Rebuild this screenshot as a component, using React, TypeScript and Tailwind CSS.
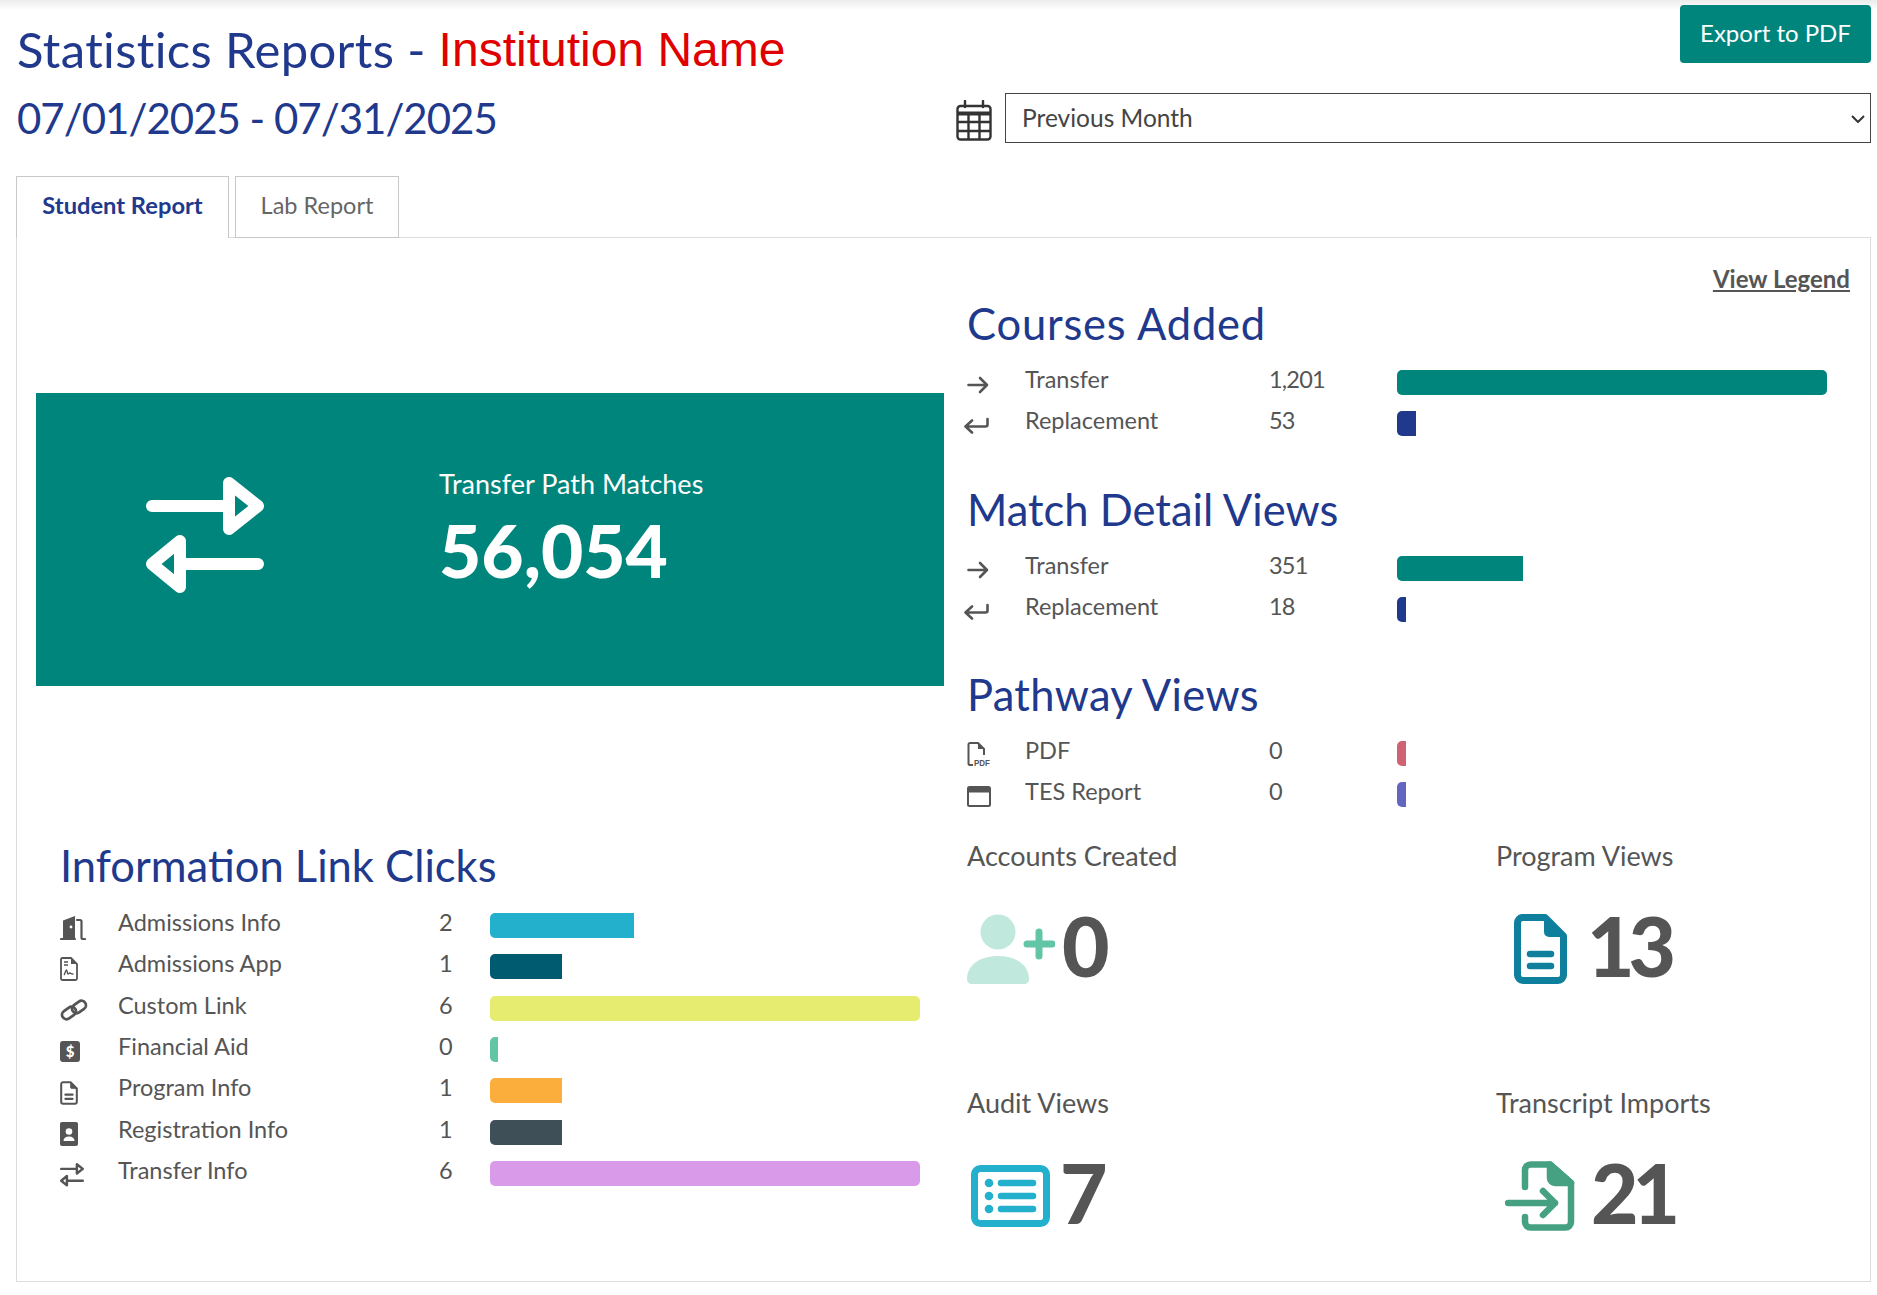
import type { ReactNode } from "react";

function SwapIcon({ className }: { className: string }) {
  return (
    <svg viewBox="0 0 118 118" className={className} fill="none" stroke="currentColor" strokeWidth="12" strokeLinecap="round" strokeLinejoin="round">
      <path d="M6 29H83M83 6V52L112 29Z" />
      <path d="M112 87H34M34 64V110L6 87Z" />
    </svg>
  );
}

function ArrowIcon() {
  return (
    <svg viewBox="0 0 22 18" className="w-[22px] h-[18px]" fill="none" stroke="#555" strokeWidth="2.600" strokeLinecap="round" strokeLinejoin="round">
      <path d="M1.500 9H20M13 2l7 7-7 7" />
    </svg>
  );
}

function ReturnIcon() {
  return (
    <svg viewBox="0 0 25 17" className="w-[25px] h-[17px] -ml-[3px]" fill="none" stroke="#555" strokeWidth="2.600" strokeLinecap="round" strokeLinejoin="round">
      <path d="M23.500 2V7.500a2 2 0 0 1-2 2H2M8 3.500l-6.500 6 6.500 6" />
    </svg>
  );
}

function PdfIcon() {
  return (
    <svg viewBox="0 0 26 27" className="w-[26px] h-[27px]">
      <path d="M6 23H3A1.500 1.500 0 0 1 1.500 21.500V2.500A1.500 1.500 0 0 1 3 1H11l6 6v6" fill="none" stroke="#555" strokeWidth="2" />
      <path d="M11 1l6 6h-6z" fill="#555" />
      <text x="7" y="23.500" fontSize="9.500" fontWeight="700" fill="#555" textLength="16" lengthAdjust="spacingAndGlyphs" fontFamily="Liberation Sans, sans-serif">PDF</text>
    </svg>
  );
}

function WindowIcon() {
  return (
    <svg viewBox="0 0 24 21" className="w-6 h-[21px]">
      <rect x="1" y="1" width="22" height="19" rx="1.500" fill="none" stroke="#555" strokeWidth="2" />
      <rect x="1" y="1" width="22" height="5.500" fill="#555" />
    </svg>
  );
}

function DoorIcon() {
  return (
    <svg viewBox="0 0 26 26" className="w-[26px] h-[26px]">
      <path d="M3 23V5.500L15 1V23z" fill="#555" />
      <circle cx="11" cy="12" r="1.400" fill="#fff" />
      <path d="M1 24H15M17 5h3a1.500 1.500 0 0 1 1.500 1.500V22.500a1.500 1.500 0 0 0 1.500 1.500H25" fill="none" stroke="#555" strokeWidth="2.200" strokeLinecap="round" />
    </svg>
  );
}

function SignDocIcon() {
  return (
    <svg viewBox="0 0 18 24" className="w-[18px] h-6">
      <path d="M2.500 1H11l6 6v14.500a1.500 1.500 0 0 1-1.500 1.500h-13A1.500 1.500 0 0 1 1 21.500v-19A1.500 1.500 0 0 1 2.500 1z" fill="none" stroke="#555" strokeWidth="1.800" />
      <path d="M11 1l6 6h-6z" fill="#555" />
      <path d="M4 5h4M4 8h4" stroke="#555" strokeWidth="1.600" />
      <path d="M4 18c1-1 1.500-5 2.500-5s.5 4 1.500 4 1-1.500 2-1 1 1 3.500 1" fill="none" stroke="#555" strokeWidth="1.400" />
    </svg>
  );
}

function LinkIcon() {
  return (
    <svg viewBox="0 0 28 22" className="w-7 h-[22px]" fill="none" stroke="#555" strokeWidth="2.800">
      <rect x="1.500" y="9.500" width="15" height="9" rx="4.500" transform="rotate(-35 9 14)" />
      <rect x="11.500" y="3.500" width="15" height="9" rx="4.500" transform="rotate(-35 19 8)" />
    </svg>
  );
}

function DollarIcon() {
  return (
    <div className="w-5 h-[21px] rounded-[3px] bg-[#555] text-white text-[15px] leading-[21px] font-black text-center">$</div>
  );
}

function DocIcon({ className, color, stroke }: { className: string; color: string; stroke: number }) {
  return (
    <svg viewBox="0 0 53 70" className={className}>
      <path d="M8 3.500H31L49.500 22V61a5.500 5.500 0 0 1-5.500 5.500H9A5.500 5.500 0 0 1 3.500 61V9A5.500 5.500 0 0 1 8 3.500z" fill="none" stroke={color} strokeWidth={stroke} strokeLinejoin="round" />
      <path d="M31 3.500L49.500 22H35a4 4 0 0 1-4-4z" fill={color} stroke={color} strokeWidth="2" strokeLinejoin="round" />
      <path d="M16 40H37M16 52H37" stroke={color} strokeWidth="6.500" strokeLinecap="round" />
    </svg>
  );
}

function ContactIcon() {
  return (
    <svg viewBox="0 0 18 24" className="w-[18px] h-6">
      <rect width="18" height="24" rx="2" fill="#555" />
      <circle cx="9" cy="9.500" r="3.300" fill="#fff" />
      <path d="M3.500 19c0-3 2-4.500 5.500-4.500s5.500 1.500 5.500 4.500z" fill="#fff" />
    </svg>
  );
}

function CalendarIcon() {
  return (
    <svg viewBox="0 0 36 41" className="w-9 h-[41px]" fill="none" stroke="#333" strokeWidth="2.400">
      <rect x="1.500" y="6" width="33" height="33.500" rx="3" />
      <path d="M9 1v6M27 1v6" strokeLinecap="round" />
      <path d="M1.500 13.500h33" strokeWidth="4" />
      <path d="M1.500 22h33M1.500 31h33M12.500 13.500v26M23.500 13.500v26" />
    </svg>
  );
}

function AccountPlusIcon() {
  return (
    <svg viewBox="0 0 88 71" className="w-[88px] h-[71px]">
      <circle cx="31" cy="19" r="17.500" fill="#c0e8dc" />
      <path d="M0 66C0 52 13 43 31 43s31 9 31 23c0 3-2 5-5 5H5c-3 0-5-2-5-5z" fill="#c0e8dc" />
      <path d="M72 19V43M60 31H85" stroke="#62c6a6" strokeWidth="7" strokeLinecap="round" />
    </svg>
  );
}

function ListIcon() {
  return (
    <svg viewBox="0 0 79 62" className="w-[79px] h-[62px]">
      <rect x="3.500" y="3.500" width="72" height="55" rx="6" fill="none" stroke="#23b0cc" strokeWidth="7" />
      <circle cx="18" cy="18" r="4.300" fill="#23b0cc" />
      <circle cx="18" cy="31" r="4.300" fill="#23b0cc" />
      <circle cx="18" cy="44" r="4.300" fill="#23b0cc" />
      <path d="M30 18H62M30 31H62M30 44H62" stroke="#23b0cc" strokeWidth="6.500" strokeLinecap="round" />
    </svg>
  );
}

function ImportIcon() {
  return (
    <svg viewBox="0 0 70 70" className="w-[70px] h-[70px]" fill="none" stroke="#45a182" strokeWidth="6.500" strokeLinecap="round" strokeLinejoin="round">
      <path d="M20 26V9a5.500 5.500 0 0 1 5.500-5.500H45L66 22V61a5.500 5.500 0 0 1-5.500 5.500H25.500A5.500 5.500 0 0 1 20 61V56" />
      <path d="M45 3.500L66 22H50a5 5 0 0 1-5-5z" fill="#45a182" />
      <path d="M3 42H50M38 30l12 12-12 12" />
    </svg>
  );
}

type Row = { icon: ReactNode; name: string; value: string; width: number; color: string };

const COURSES: Row[] = [
  { icon: <ArrowIcon />, name: "Transfer", value: "1,201", width: 430, color: "bg-[#00857c]" },
  { icon: <ReturnIcon />, name: "Replacement", value: "53", width: 19, color: "bg-[#21398c]" },
];
const MATCHES: Row[] = [
  { icon: <ArrowIcon />, name: "Transfer", value: "351", width: 126, color: "bg-[#00857c]" },
  { icon: <ReturnIcon />, name: "Replacement", value: "18", width: 9, color: "bg-[#21398c]" },
];
const PATHWAYS: Row[] = [
  { icon: <PdfIcon />, name: "PDF", value: "0", width: 9, color: "bg-[#cf6373]" },
  { icon: <WindowIcon />, name: "TES Report", value: "0", width: 9, color: "bg-[#6266c0]" },
];
const LINKS: Row[] = [
  { icon: <DoorIcon />, name: "Admissions Info", value: "2", width: 144, color: "bg-[#23b0cc]" },
  { icon: <SignDocIcon />, name: "Admissions App", value: "1", width: 72, color: "bg-[#005b70]" },
  { icon: <LinkIcon />, name: "Custom Link", value: "6", width: 430, color: "bg-[#e5ec6f]" },
  { icon: <DollarIcon />, name: "Financial Aid", value: "0", width: 8, color: "bg-[#62c6a6]" },
  { icon: <DocIcon className="w-[18px] h-6" color="#555" stroke={6} />, name: "Program Info", value: "1", width: 72, color: "bg-[#fbae3c]" },
  { icon: <ContactIcon />, name: "Registration Info", value: "1", width: 72, color: "bg-[#3f4f58]" },
  { icon: <SwapIcon className="w-6 h-6 text-[#555]" />, name: "Transfer Info", value: "6", width: 430, color: "bg-[#d99be9]" },
];

function BarRow({ row, nameWidth, valueWidth }: { row: Row; nameWidth: string; valueWidth: string }) {
  return (
    <div className="flex items-center h-[41.300px] text-[23.500px] text-[#555]">
      <div className="w-[58px] shrink-0 flex items-center pt-[4px]">{row.icon}</div>
      <div className={`shrink-0 ${nameWidth} -mt-[6px]`}>{row.name}</div>
      <div className={`shrink-0 ${valueWidth} -mt-[6px] tracking-[-0.8px]`}>{row.value}</div>
      <div
        className={`h-[25px] rounded-l-[5px] ${row.width >= 430 ? "rounded-r-[5px]" : ""} ${row.color}`}
        style={{ width: row.width }}
      />
    </div>
  );
}

function Section({ title, rows, titleClass = "" }: { title: string; rows: Row[]; titleClass?: string }) {
  return (
    <section className="h-[185.500px]">
      <h2 className={`text-[43.500px] leading-[52px] text-[#21398c] ${titleClass}`}>{title}</h2>
      <div className="mt-[13px]">
        {rows.map((r) => (
          <BarRow key={r.name} row={r} nameWidth="w-[244px]" valueWidth="w-[128px]" />
        ))}
      </div>
    </section>
  );
}

function Stat({ label, icon, value, className }: { label: string; icon: ReactNode; value: string; className: string }) {
  return (
    <div className="h-[247px]">
      <div className="text-[27px] leading-[32px] text-[#555]">{label}</div>
      <div className={`flex items-center h-[72px] mt-[41px] ${className}`}>
        {icon}
        <span className="text-[82px] leading-none font-black tracking-[-6px] text-[#555] -mt-[7px]">{value}</span>
      </div>
    </div>
  );
}

export default function App() {
  return (
    <div className="h-[1295px] bg-white overflow-hidden font-[Lato,sans-serif]">
      <div className="h-[10px] -mb-[10px] bg-gradient-to-b from-[#ececec] to-white" />

      {/* Header */}
      <header className="flex justify-between h-[176px] pl-[17px] mr-[6px]">
        <div>
          <h1 className="mt-[20px] text-[49px] tracking-[0.35px] leading-[58px] text-[#21398c]">
            Statistics Reports -{" "}
            <span className="font-['Liberation_Sans',sans-serif] text-[48px] tracking-normal align-[2px] text-[#e00000]">Institution Name</span>
          </h1>
          <div className="mt-[12px] text-[42px] tracking-[-1px] leading-[54px] text-[#21398c]">07/01/2025 - 07/31/2025</div>
        </div>
        <div className="w-[915px] flex flex-col items-end">
          <button className="mt-[5px] w-[191px] h-[58px] pb-[3px] rounded-[4px] bg-[#00857c] text-white text-[24px]">
            Export to PDF
          </button>
          <div className="mt-[30px] w-full flex items-center gap-[13px]">
            <div className="mt-[5px]"><CalendarIcon /></div>
            <div className="flex-1 relative">
              <select className="block w-full h-[50px] pl-4 appearance-none rounded-none border border-[#444] bg-white text-[24.500px] text-[#444]">
                <option>Previous Month</option>
              </select>
              <svg viewBox="0 0 14 8" className="absolute right-[6px] top-[22px] w-[14px] h-2" fill="none" stroke="#333" strokeWidth="2">
                <path d="M1 1l6 6 6-6" />
              </svg>
            </div>
          </div>
        </div>
      </header>

      {/* Tabs */}
      <nav className="flex ml-4 h-[62px] gap-[6px] relative z-10">
        <div className="w-[213px] h-[62px] pb-[3px] border border-b-0 border-[#c8c8c8] bg-white flex items-center justify-center text-[23.700px] font-bold text-[#21398c]">
          Student Report
        </div>
        <div className="w-[164px] h-[62px] pb-[3px] border border-[#c8c8c8] flex items-center justify-center text-[23.500px] text-[#666]">
          Lab Report
        </div>
      </nav>

      {/* Panel */}
      <main className="ml-4 mr-[6px] -mt-px h-[1045px] border border-[#dcdcdc] flex">
        <div className="w-[950px] shrink-0 pl-[19px]">
          <div className="mt-[155px] w-[908px] h-[293px] bg-[#00857c] flex items-center text-white">
            <SwapIcon className="ml-[110px] w-[118px] h-[118px] -mt-[8px]" />
            <div className="ml-[175px] -mt-[22px]">
              <div className="text-[27px] leading-[32px] mb-[10px]">Transfer Path Matches</div>
              <div className="text-[73px] leading-[80px] font-black">56,054</div>
            </div>
          </div>
          <div className="pl-6 mt-[153px]">
            <h2 className="text-[43.500px] leading-[52px] text-[#21398c]">Information Link Clicks</h2>
            <div className="mt-[14px]">
              {LINKS.map((r) => (
                <BarRow key={r.name} row={r} nameWidth="w-[321px]" valueWidth="w-[51px]" />
              ))}
            </div>
          </div>
        </div>

        <div className="flex-1 pr-[20px]">
          <div className="flex justify-end mt-[23px] h-[32px]">
            <a className="text-[24px] font-bold text-[#555] underline">View Legend</a>
          </div>
          <div className="mt-[4px]">
            <Section title="Courses Added" rows={COURSES} titleClass="tracking-[0.8px]" />
            <Section title="Match Detail Views" rows={MATCHES} />
            <Section title="Pathway Views" rows={PATHWAYS} titleClass="tracking-[0.3px]" />
          </div>
          <div className="grid grid-cols-[529px_1fr] -mt-[14px]">
            <Stat label="Accounts Created" icon={<AccountPlusIcon />} value="0" className="gap-[7px]" />
            <Stat label="Program Views" icon={<DocIcon className="w-[53px] h-[70px]" color="#0e7f9d" stroke={7} />} value="13" className="ml-[18px] gap-[20px]" />
            <Stat label="Audit Views" icon={<ListIcon />} value="7" className="ml-[4px] gap-[10px]" />
            <Stat label="Transcript Imports" icon={<ImportIcon />} value="21" className="ml-[9px] gap-[16px]" />
          </div>
        </div>
      </main>
    </div>
  );
}
